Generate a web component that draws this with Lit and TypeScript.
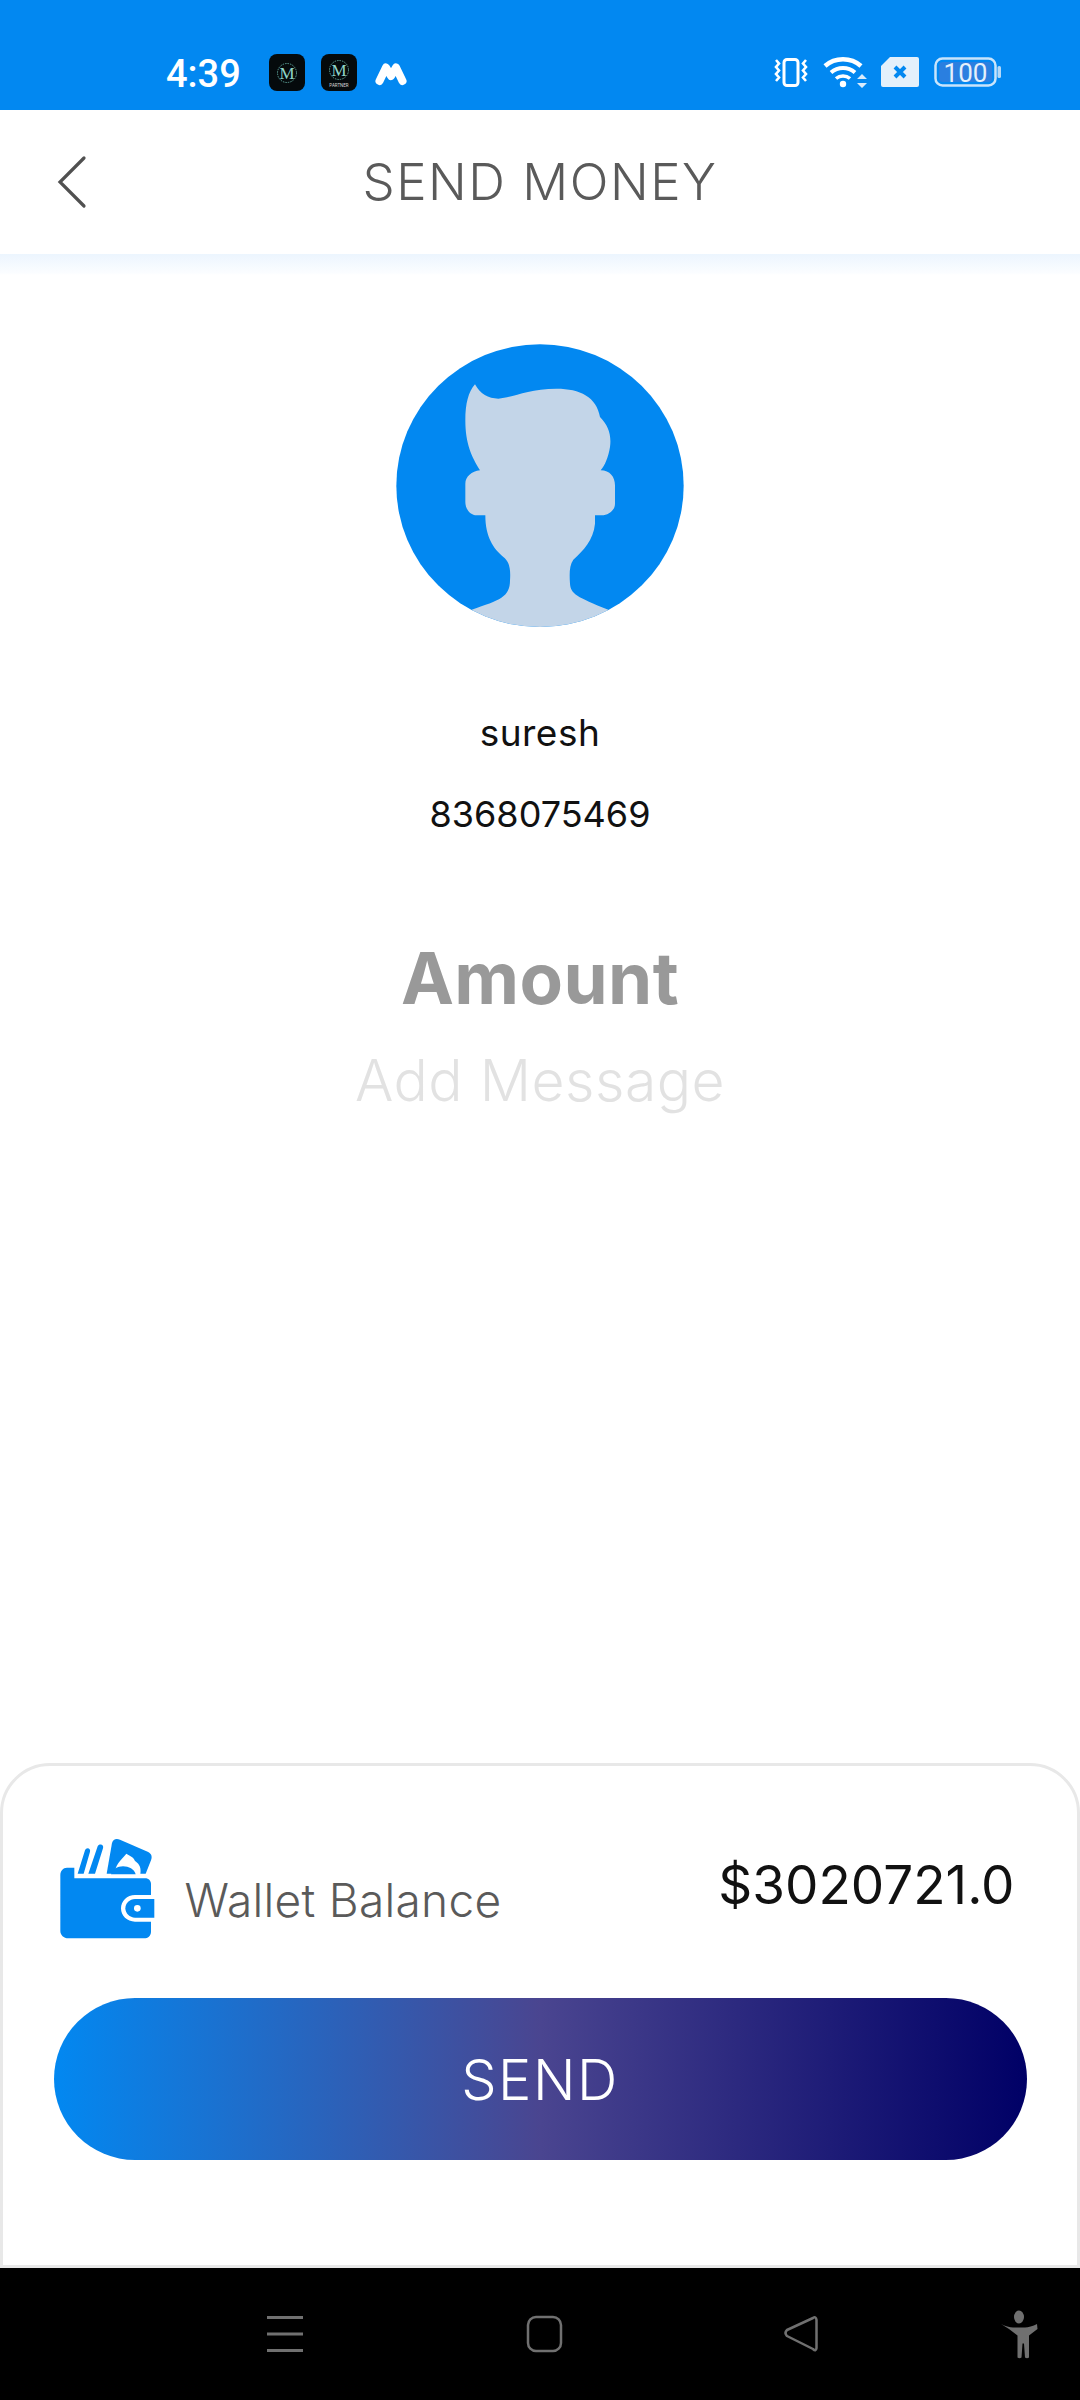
import { LitElement, html, svg, css } from "lit";
import { customElement } from "lit/decorators.js";

@customElement("app-root")
export class AppRoot extends LitElement {
  static styles = css`
    :host { display: block; width: 1080px; height: 2400px; background: #fff; font-family: Inter, "Liberation Sans", sans-serif; overflow: hidden; }
    .page { display: flex; flex-direction: column; height: 2400px; }
    .status { height: 110px; flex: none; background: #0288f1; display: flex; justify-content: space-between; box-sizing: border-box; padding: 54px 78px 0 166px; color: #fff; }
    .status-left, .status-right { display: flex; align-items: flex-start; }
    .time { font: 500 38px/38px Roboto, sans-serif; width: 103px; margin-top: 1px; }
    .app { display: block; margin-right: 16px; }
    .mlogo { display: block; margin: 8px 0 0 2px; }
    .status-right svg { display: block; }
    .header { height: 144px; flex: none; display: grid; grid-template-columns: 1fr auto 1fr; align-items: center; background: #fff; }
    .back { padding-left: 57px; display: flex; }
    .title { font-size: 51px; font-weight: 300; color: #5a5a5a; letter-spacing: 1.500px; line-height: 60px; }
    .shade { height: 21px; flex: none; background: linear-gradient(#ecf5fe, #fbfdff 90%, #fff); }
    .main { flex: 1; display: flex; flex-direction: column; align-items: center; padding-top: 69px; text-align: center; }
    .avatar { display: block; }
    .name { margin-top: 83px; font-size: 37px; line-height: 44px; color: #111; font-weight: 400; letter-spacing: 0.500px; }
    .phone { margin-top: 37px; font-size: 36px; line-height: 44px; color: #111; font-weight: 400; }
    .amount { margin-top: 102px; font-size: 71px; line-height: 80px; font-weight: 700; color: #999; letter-spacing: 0.400px; }
    .msg { margin-top: 30px; font-size: 57px; line-height: 66px; font-weight: 300; color: #e2e2e2; letter-spacing: 0.500px; }
    .card { flex: none; height: 505px; box-sizing: border-box; border: 3.500px solid #e8e8e8; border-radius: 50px 50px 0 0; background: #fff; padding: 0 50.500px; }
    .row { height: 232px; display: flex; align-items: flex-start; }
    .wallet { display: block; margin: 55px 0 0 -15px; flex: none; }
    .label { margin: 107px 0 0 16px; font-size: 46px; font-weight: 300; color: #5a5a5a; line-height: 54px; letter-spacing: 0.300px; }
    .balance { margin: 87px 12px 0 auto; font-size: 53px; line-height: 64px; font-weight: 400; color: #111; letter-spacing: 0; }
    .send { height: 162px; border-radius: 81px; background: linear-gradient(90deg, #0288f1 0%, #4a4590 50%, #000066 100%); color: #fff; font-size: 56px; font-weight: 300; letter-spacing: 1.500px; display: flex; align-items: center; justify-content: center; padding-top: 2px; box-sizing: border-box; }
    .nav { height: 132px; flex: none; background: #000; display: flex; }
    .nav svg { display: block; }
  `;

  render() {
    return html`<div class="page">
      <div class="status">
        <div class="status-left">
          <span class="time">4:39</span>
          ${this.appIcon(false)}${this.appIcon(true)}
          <svg class="mlogo" width="32" height="24" viewBox="0 0 32 24"><path d="M4.500 19 L11 5.500 L16 14 L21 5.500 L27.500 19" fill="none" stroke="#fff" stroke-width="8" stroke-linecap="round" stroke-linejoin="round"/></svg>
        </div>
        <div class="status-right">
          <svg width="230" height="40" viewBox="772 54 230 40" fill="none">
            <rect x="784" y="59.500" width="14" height="26" rx="3" stroke="#fff" stroke-width="3"/>
            <path d="M776 60l3 3.500-3 3.500 3 3.500-3 3.500 3 3.500-3 3.500M806 60l-3 3.500 3 3.500-3 3.500 3 3.500-3 3.500 3 3.500" stroke="#fff" stroke-width="2.600"/>
            <path d="M825 66c10-9 26-9 36 0" stroke="#fff" stroke-width="4.500"/>
            <path d="M831 72.500c7-6 17-6 24 0" stroke="#fff" stroke-width="4"/>
            <path d="M836 78.500c4-3.500 10-3.500 14 0" stroke="#fff" stroke-width="3.500"/>
            <circle cx="843" cy="84" r="3.200" fill="#fff"/>
            <path d="M857 79h10l-5-5zM857 83h10l-5 5z" fill="#d9ebfc"/>
            <path d="M890 57h27a2 2 0 0 1 2 2v26a2 2 0 0 1-2 2h-34a2 2 0 0 1-2-2V66z" fill="#e4f0fb"/>
            <path d="M895 67l10 10M905 67l-10 10" stroke="#0288f1" stroke-width="4"/>
            <rect x="935.500" y="58.500" width="60" height="27" rx="7" stroke="#c9e4fb" stroke-width="2.500"/>
            <rect x="939" y="62" width="53" height="20" rx="4" fill="#2a7fe0"/>
            <rect x="997.500" y="66" width="3.500" height="12" rx="1.500" fill="#b5d9f8"/>
            <text x="965.500" y="81.500" text-anchor="middle" font-family="Roboto, sans-serif" font-size="26" fill="#e4f0fb">100</text>
          </svg>
        </div>
      </div>
      <div class="header">
        <div class="back">
          <svg width="30" height="54" viewBox="0 0 30 54" fill="none"><path d="M27 3 L3 27 L27 51" stroke="#505050" stroke-width="3.200" stroke-linecap="round"/></svg>
        </div>
        <div class="title">SEND MONEY</div>
        <div></div>
      </div>
      <div class="shade"></div>
      <div class="main">
        <svg class="avatar" width="288" height="284" viewBox="108 72 864 850">
          <defs><clipPath id="cc"><ellipse cx="540" cy="496" rx="431" ry="424"/></clipPath></defs>
          <ellipse cx="540" cy="496" rx="431" ry="424" fill="#0288f1"/>
          <path clip-path="url(#cc)" fill="#c3d5e8" d="M345 192C360 220 385 235 415 235C460 232 500 205 590 205C660 205 710 230 720 290C745 315 755 345 750 380C745 410 735 435 722 450C750 450 765 470 765 495L765 550C765 570 745 585 725 585L705 585L705 610C700 660 670 690 640 718C628 735 628 760 630 790C632 820 650 830 745 868L745 950L335 950L335 868C420 840 450 830 450 780C452 750 450 725 430 710C400 685 376 650 376 585L350 585C330 585 316 565 316 545L316 490C316 470 335 452 360 450C335 410 316 370 316 300C316 250 325 215 345 192Z"/>
        </svg>
        <div class="name">suresh</div>
        <div class="phone">8368075469</div>
        <div class="amount">Amount</div>
        <div class="msg">Add Message</div>
      </div>
      <div class="card">
        <div class="row">
          <svg class="wallet" width="130" height="130" viewBox="0 0 390 390">
            <path fill="#0288f1" d="M116 158L138 88C141 78 156 80 153 92L134 158ZM148 158L176 76C180 66 196 70 192 82L168 158Z"/>
            <path fill="#0288f1" d="M203 158L219 66C222 54 232 52 243 56L326 92C338 98 340 106 336 118L320 158Z"/>
            <path fill="#fff" d="M226 160C228 132 245 118 262 98C272 104 284 108 288 120C296 126 308 134 304 160Z"/>
            <path fill="#0288f1" d="M216 160C222 128 282 128 290 160Z"/>
            <path fill="#0288f1" d="M84 140L106 140L106 172L318 172C330 172 336 180 336 190L336 222L288 222C264 222 246 240 246 262C246 284 264 302 288 302L336 302L336 332C336 345 326 352 316 352L88 352C74 352 64 342 64 330L64 162C64 150 72 140 84 140Z"/>
            <path fill="#0288f1" d="M288 234L346 234L346 290L288 290C272 290 259 277 259 262C259 247 272 234 288 234Z"/>
            <circle cx="295" cy="262" r="10" fill="#fff"/>
          </svg>
          <div class="label">Wallet Balance</div>
          <div class="balance">$3020721.0</div>
        </div>
        <div class="send">SEND</div>
      </div>
      <div class="nav">
        <svg width="1080" height="132" viewBox="0 2268 1080 132" fill="none">
          <path d="M267 2317.500h36M267 2334h36M267 2350.500h36" stroke="#707070" stroke-width="3"/>
          <rect x="528" y="2317" width="33" height="34" rx="8" stroke="#707070" stroke-width="2.500"/>
          <path d="M816.500 2320V2348Q816 2352 813 2349L787 2336Q784 2333 787 2330L813 2318Q816 2316 816.500 2320Z" stroke="#707070" stroke-width="2.500" stroke-linejoin="round"/>
          <ellipse cx="1019" cy="2317" rx="5" ry="6.500" fill="#707070"/>
          <path fill="#707070" d="M1001 2324c4 2 9 3.500 12 3.500h12c3 0 8-1.500 12-3.500l.5 5-8.500 6.500v22q-2 1.500-4 0l-1-14h-1.500l-1 14q-2 1.500-4 0v-22l-8.500-6.500z"/>
        </svg>
      </div>
    </div>`;
  }

  private appIcon(partner: boolean) {
    const cy = partner ? 16 : 19;
    return html`<svg class="app" width="36" height="37" viewBox="0 0 36 37">
      <rect width="36" height="37" rx="8" fill="#050a0c"/>
      <circle cx="18" cy=${cy} r="9.500" fill="none" stroke="#6fc0b4" stroke-width="0.800" stroke-dasharray="1.500 1"/>
      <text x="18" y=${cy + 6} text-anchor="middle" font-family="Liberation Serif, serif" font-size="17" fill="#8fd6ca">M</text>
      ${partner ? svg`<text x="18" y="33" text-anchor="middle" font-family="Roboto, sans-serif" font-size="4.500" fill="#d8d8d8">PARTNER</text>` : ""}
    </svg>`;
  }
}
